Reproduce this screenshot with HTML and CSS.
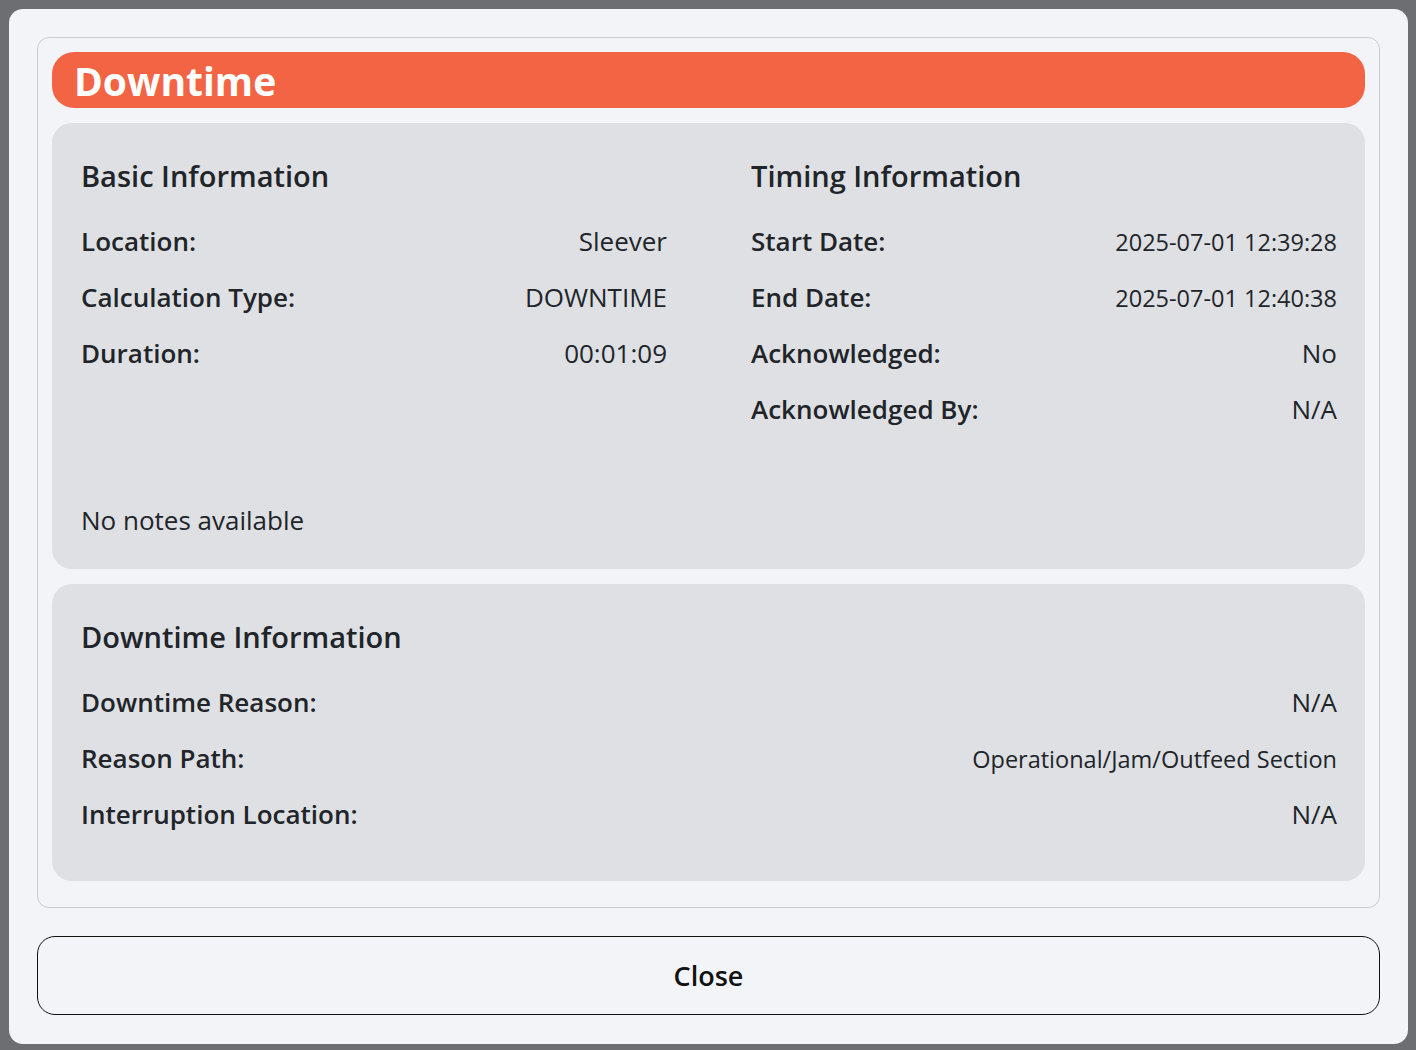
FILE: index.html
```html
<!DOCTYPE html>
<html lang="en">
<head>
<meta charset="utf-8">
<title>Downtime</title>
<link rel="stylesheet" href="styles.css">
</head>
<body>
<div class="backdrop">
  <div class="modal">
    <div class="card">
      <div class="title-bar"><h1 class="title">Downtime</h1></div>
      <section class="panel panel-basic">
        <div class="cols">
          <div class="col">
            <h2 class="panel-title">Basic Information</h2>
            <div class="row"><span class="label">Location:</span><span class="value">Sleever</span></div>
            <div class="row"><span class="label">Calculation Type:</span><span class="value">DOWNTIME</span></div>
            <div class="row"><span class="label">Duration:</span><span class="value">00:01:09</span></div>
          </div>
          <div class="col">
            <h2 class="panel-title">Timing Information</h2>
            <div class="row"><span class="label">Start Date:</span><span class="value small">2025-07-01 12:39:28</span></div>
            <div class="row"><span class="label">End Date:</span><span class="value small">2025-07-01 12:40:38</span></div>
            <div class="row"><span class="label">Acknowledged:</span><span class="value">No</span></div>
            <div class="row"><span class="label">Acknowledged By:</span><span class="value">N/A</span></div>
          </div>
        </div>
        <p class="notes">No notes available</p>
      </section>
      <section class="panel panel-downtime">
        <h2 class="panel-title">Downtime Information</h2>
        <div class="row"><span class="label">Downtime Reason:</span><span class="value">N/A</span></div>
        <div class="row"><span class="label">Reason Path:</span><span class="value small">Operational/Jam/Outfeed Section</span></div>
        <div class="row"><span class="label">Interruption Location:</span><span class="value">N/A</span></div>
      </section>
    </div>
    <button class="close-btn" type="button">Close</button>
  </div>
</div>
</body>
</html>
```
FILE: styles.css
```css
* { box-sizing: border-box; }
html, body { margin: 0; padding: 0; }
body {
  width: 1416px;
  height: 1050px;
  overflow: hidden;
  font-family: "Open Sans", "Noto Sans", sans-serif;
  color: #212529;
  background: #6d6e72;
}
.backdrop {
  padding: 9px 8px 6px 9px;
  height: 1050px;
}
.modal {
  width: 1399px;
  height: 1035px;
  background: #f3f4f8;
  border-radius: 14px;
  padding: 28px 28px 0 28px;
}
.card {
  border: 1px solid #c9cbd0;
  border-radius: 12px;
  padding: 14px 14px 26px 14px;
  display: flex;
  flex-direction: column;
  gap: 15px;
}
.title-bar {
  background: #f26444;
  border-radius: 22px;
  height: 56px;
  padding: 0 22px;
  display: flex;
  align-items: center;
}
.title {
  margin: 0;
  color: #fff;
  font-size: 39px;
  font-weight: 700;
  line-height: 1;
}
.panel {
  background: #dee0e4;
  border-radius: 20px;
  padding: 33px 28px 31px 29px;
}
.panel-downtime { padding-bottom: 39px; }
.cols {
  display: grid;
  grid-template-columns: 1fr 1fr;
  column-gap: 84px;
}
.panel-title {
  margin: 0 0 17px 0;
  font-size: 29px;
  font-weight: 600;
  line-height: 40px;
}
.row {
  display: flex;
  justify-content: space-between;
  align-items: baseline;
  height: 56px;
  line-height: 56px;
  font-size: 26px;
}
.label { font-weight: 600; }
.value { font-weight: 400; }
.value.small { font-size: 23.5px; }
.notes {
  margin: 65px 0 0 0;
  font-size: 26px;
  line-height: 36px;
}
.close-btn {
  display: block;
  width: 100%;
  margin-top: 28px;
  height: 79px;
  border: 1.5px solid #111;
  border-radius: 18px;
  background: transparent;
  font-family: inherit;
  font-size: 27px;
  font-weight: 600;
  color: #111;
}
```
